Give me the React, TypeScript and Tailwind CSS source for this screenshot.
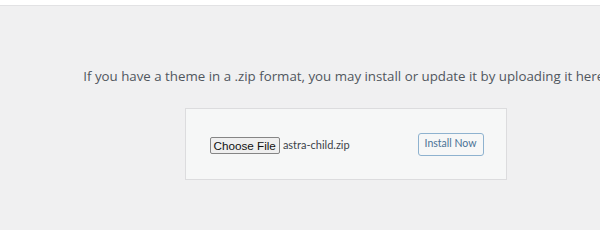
export default function App() {
  return (
    <div className="w-[600px] h-[230px] overflow-hidden bg-[#f0f0f1] font-['Open_Sans',sans-serif]">
      {/* top bar edge */}
      <div className="h-[5px] bg-white" />
      <div className="h-px bg-[#e2e2e4]" />

      <div className="w-[691px] pt-[61px]">
        <p className="text-center text-[13.3px] leading-[19px] text-[#50575e] whitespace-nowrap">
          If you have a theme in a .zip format, you may install or update it by uploading it here.
        </p>

        <div className="mx-auto mt-[22px] w-[322px] h-[72px] border border-[#dcdcde] bg-[#f6f7f7] flex items-center justify-between pl-[24px] pr-[22px]">
          <div className="flex items-center mt-[3px]">
            <span className="h-[17px] px-[3px] flex items-center border border-[#858585] bg-[#efefef] rounded-[2px] text-[11.7px] text-[#111] font-['Liberation_Sans',sans-serif]">
              Choose File
            </span>
            <span className="ml-[3px] text-[11px] text-[#3c434a] font-['Lato',sans-serif]">astra-child.zip</span>
          </div>
          <button className="h-[23px] w-[66px] rounded-[3px] border border-[#8eb2cf] bg-[#f6f7f7] text-[10.5px] text-[#4a7396] font-['Lato',sans-serif]">
            Install Now
          </button>
        </div>
      </div>
    </div>
  );
}
